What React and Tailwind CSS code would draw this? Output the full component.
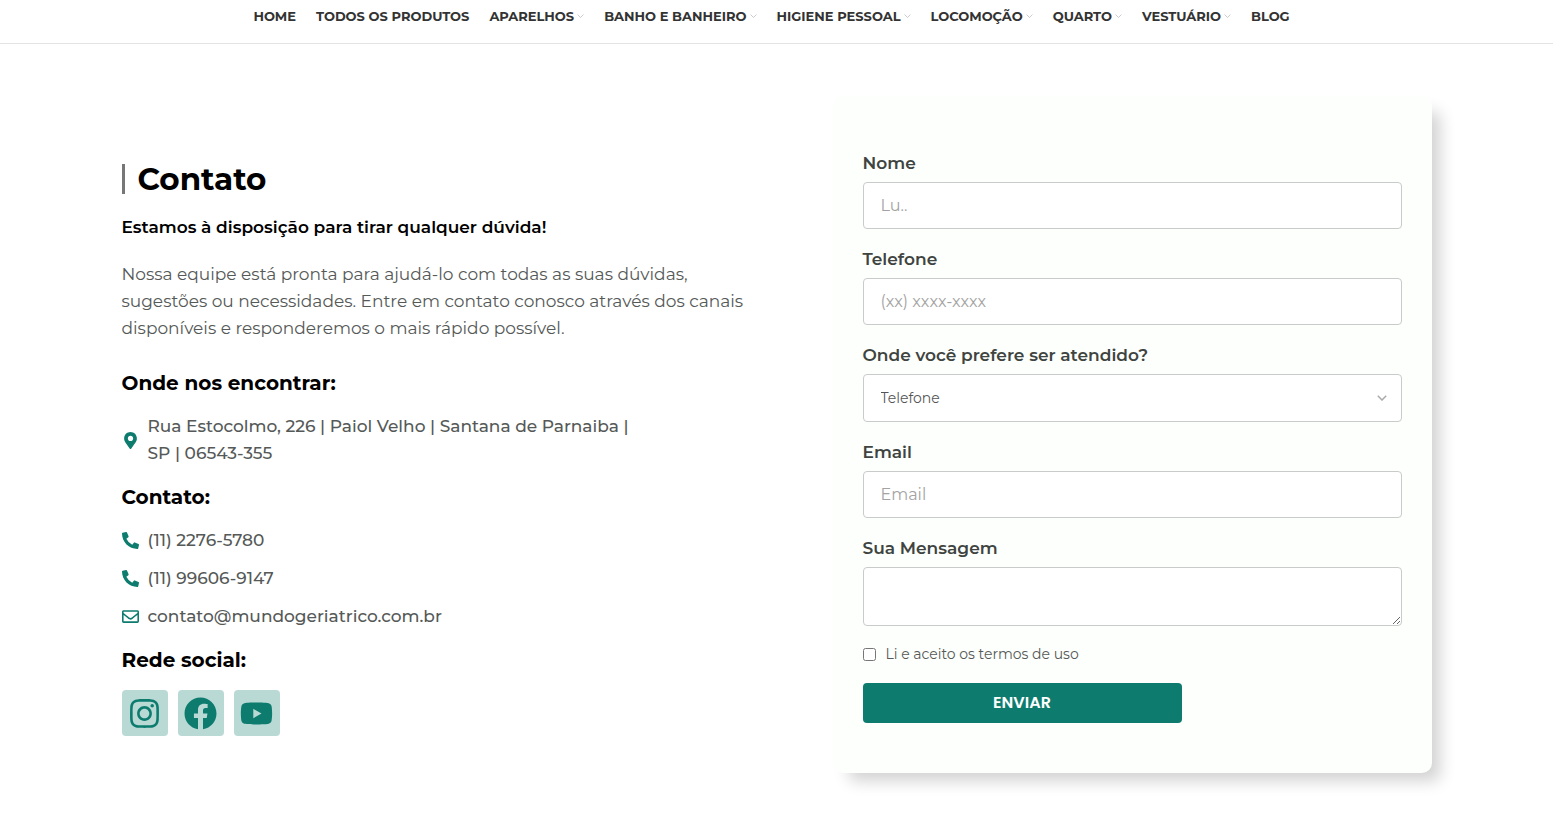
import React, { useState } from "react";
import {
  FaFacebook,
  FaInstagram,
  FaMapMarkerAlt,
  FaPhoneAlt,
  FaRegEnvelope,
  FaYoutube,
} from "react-icons/fa";

const menu = [
  { label: "Home" },
  { label: "Todos os produtos" },
  { label: "Aparelhos", dropdown: true },
  { label: "Banho e banheiro", dropdown: true },
  { label: "Higiene pessoal", dropdown: true },
  { label: "Locomoção", dropdown: true },
  { label: "Quarto", dropdown: true },
  { label: "Vestuário", dropdown: true },
  { label: "Blog" },
];

const phones = ["(11) 2276-5780", "(11) 99606-9147"];

const socials = [
  { label: "Instagram", Icon: FaInstagram },
  { label: "Facebook", Icon: FaFacebook },
  { label: "YouTube", Icon: FaYoutube },
];

function Chevron({ className }) {
  return (
    <svg viewBox="0 0 10 6" fill="none" stroke="currentColor" className={className}>
      <path d="M0.8 0.8 5 5 9.2 0.8" />
    </svg>
  );
}

function SectionTitle({ children }) {
  return <h3 className="text-xl leading-6 font-bold text-black">{children}</h3>;
}

function Field({ id, label, children }) {
  return (
    <div className="flex flex-col gap-[5px]">
      <label htmlFor={id} className="text-[17px] leading-[27px] font-semibold text-[#3f4441]">
        {label}
      </label>
      {children}
    </div>
  );
}

const inputStyle =
  "h-[47px] w-full rounded border border-[#c8cbc9] bg-white px-[17px] text-base font-normal text-[#444] outline-none placeholder:text-[#a3a3a3]";

export default function App() {
  const [formData, setFormData] = useState({
    nome: "",
    telefone: "",
    preferencia: "Telefone",
    email: "",
    mensagem: "",
    termos: false,
  });

  const handleChange = (e) => {
    const { name, value, type, checked } = e.target;
    setFormData((prev) => ({
      ...prev,
      [name]: type === "checkbox" ? checked : value,
    }));
  };

  const handleSubmit = (e) => {
    e.preventDefault();
  };

  return (
    <div className="bg-white font-[Montserrat,Inter,sans-serif] text-[#555957]">

      {/* Menu */}
      <header className="border-b border-[#e3e3e3] pt-1 pb-3.5">
        <nav className="flex flex-wrap justify-center gap-x-5 pr-2.5">
          {menu.map((item) => (
            <a
              key={item.label}
              href="#"
              className="flex items-center gap-[3px] text-[13px] leading-[25px] font-bold whitespace-nowrap text-[#333] uppercase"
            >
              {item.label}
              {item.dropdown && <Chevron className="w-[7px] text-[#b4b4b4]" />}
            </a>
          ))}
        </nav>
      </header>

      <main className="mx-auto flex max-w-[1310px] items-start justify-between gap-14 pt-[52px] pb-11">

        {/* Contact info */}
        <section className="flex-1 pt-[68px]">
          <h1 className="border-l-3 border-[#777] pl-[13px] text-[31px] leading-[30px] font-bold text-black">
            Contato
          </h1>
          <h2 className="mt-5 text-[17px] leading-[27px] font-semibold text-black">
            Estamos à disposição para tirar qualquer dúvida!
          </h2>
          <p className="mt-5 text-[17px] leading-[27px] font-normal">
            Nossa equipe está pronta para ajudá-lo com todas as suas dúvidas,
            <br />
            sugestões ou necessidades. Entre em contato conosco através dos canais
            <br />
            disponíveis e responderemos o mais rápido possível.
          </p>

          <div className="mt-[29px]">
            <SectionTitle>Onde nos encontrar:</SectionTitle>
            <div className="mt-[18px] flex items-center gap-[9px] text-[17px] leading-[27px] font-medium">
              <FaMapMarkerAlt className="w-[17px] shrink-0 text-[#0d7c6f]" />
              <address className="not-italic">
                Rua Estocolmo, 226 | Paiol Velho | Santana de Parnaiba |
                <br />
                SP | 06543-355
              </address>
            </div>
          </div>

          <div className="mt-[18px]">
            <SectionTitle>Contato:</SectionTitle>
            <ul className="mt-[18px] flex flex-col gap-[11px] text-[17px] leading-[27px] font-medium">
              {phones.map((phone) => (
                <li key={phone}>
                  <a href="#" className="flex items-center gap-[9px]">
                    <FaPhoneAlt className="w-[17px] text-[#0d7c6f]" />
                    {phone}
                  </a>
                </li>
              ))}
              <li>
                <a href="#" className="flex items-center gap-[9px]">
                  <FaRegEnvelope className="w-[17px] text-[#0d7c6f]" />
                  contato@mundogeriatrico.com.br
                </a>
              </li>
            </ul>
          </div>

          <div className="mt-[18px]">
            <SectionTitle>Rede social:</SectionTitle>
            <div className="mt-[18px] flex gap-2.5">
              {socials.map(({ label, Icon }) => (
                <a
                  key={label}
                  href="#"
                  aria-label={label}
                  className="flex size-[46px] items-center justify-center rounded bg-[#b9d9d5] text-[#0d7c6f]"
                >
                  <Icon className="size-[33px]" />
                </a>
              ))}
            </div>
          </div>
        </section>

        {/* Form */}
        <form
          onSubmit={handleSubmit}
          className="flex w-1/2 max-w-[599px] flex-col gap-[17px] rounded-[10px] bg-[#fdfffc] px-[30px] pt-[54px] pb-[50px] shadow-[12px_12px_16px_-4px_rgba(0,0,0,0.18)]"
        >
          <Field id="nome" label="Nome">
            <input
              id="nome"
              name="nome"
              type="text"
              placeholder="Lu.."
              value={formData.nome}
              onChange={handleChange}
              className={inputStyle}
            />
          </Field>

          <Field id="telefone" label="Telefone">
            <input
              id="telefone"
              name="telefone"
              type="tel"
              placeholder="(xx) xxxx-xxxx"
              value={formData.telefone}
              onChange={handleChange}
              className={inputStyle}
            />
          </Field>

          <Field id="preferencia" label="Onde você prefere ser atendido?">
            <div className="grid items-center">
              <select
                id="preferencia"
                name="preferencia"
                value={formData.preferencia}
                onChange={handleChange}
                className="col-start-1 row-start-1 h-12 w-full appearance-none rounded border border-[#c8cbc9] bg-white px-[17px] text-sm font-normal text-[#555] outline-none"
              >
                <option value="Telefone">Telefone</option>
                <option value="Email">Email</option>
                <option value="WhatsApp">WhatsApp</option>
              </select>
              <Chevron className="pointer-events-none col-start-1 row-start-1 mr-[15px] w-2.5 justify-self-end stroke-[1.5] text-[#aaa]" />
            </div>
          </Field>

          <Field id="email" label="Email">
            <input
              id="email"
              name="email"
              type="email"
              placeholder="Email"
              value={formData.email}
              onChange={handleChange}
              className={inputStyle}
            />
          </Field>

          <Field id="mensagem" label="Sua Mensagem">
            <textarea
              id="mensagem"
              name="mensagem"
              value={formData.mensagem}
              onChange={handleChange}
              className="h-[59px] w-full resize-y rounded border border-[#c8cbc9] bg-white px-[17px] py-2 text-base font-normal outline-none"
            />
          </Field>

          <label className="flex items-center gap-2.5 text-sm leading-[23px] font-normal">
            <input
              type="checkbox"
              name="termos"
              checked={formData.termos}
              onChange={handleChange}
              className="size-[13px]"
            />
            Li e aceito os termos de uso
          </label>

          <button
            type="submit"
            className="h-10 w-full max-w-[319px] rounded bg-[#0d7c6f] font-[Poppins,Montserrat,Inter,sans-serif] text-base font-semibold text-white uppercase"
          >
            Enviar
          </button>
        </form>
      </main>
    </div>
  );
}
